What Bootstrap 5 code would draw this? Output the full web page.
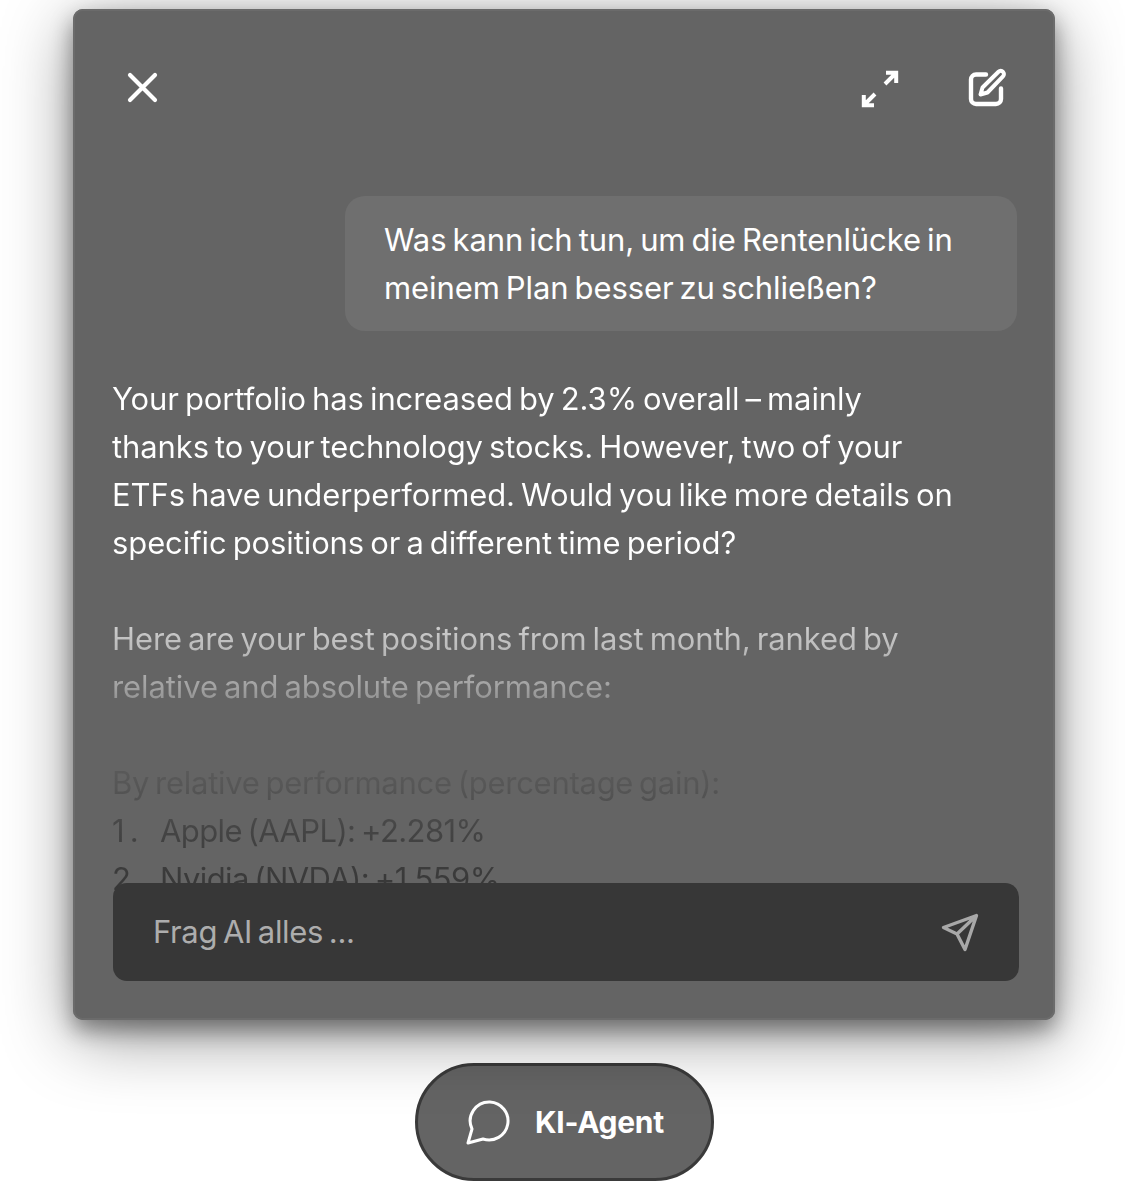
<!DOCTYPE html>
<html lang="de">
<head>
    <meta charset="UTF-8">
    <meta name="viewport" content="width=device-width, initial-scale=1.0">
    <title>KI-Agent</title>
    <link href="https://cdn.jsdelivr.net/npm/bootstrap@5.3.3/dist/css/bootstrap.min.css" rel="stylesheet">
    <style>
        body {
            background-color: #ffffff;
            font-family: 'Inter', 'Liberation Sans', sans-serif;
            overflow: hidden;
            height: 1203px;
            padding-top: 9px;
        }

        /* Chat panel */
        .agent-panel {
            width: 982px;
            height: 1011px;
            margin-left: 73px;
            background-color: #646464;
            border-radius: 10px;
            box-shadow: inset 0 0 0 2px #6b6b6b, 0 10px 22px rgba(0, 0, 0, .4), 0 16px 70px rgba(0, 0, 0, .42);
            overflow: hidden;
        }

        .agent-head {
            padding: 58px 48px 0 51px;
            height: 187px;
        }

        .agent-thread {
            padding: 0 38px 0 39px;
            font-size: 31px;
            line-height: 48px;
            letter-spacing: -.1px;
            word-spacing: -2.5px;
            color: #fff;
        }

        .user-bubble {
            width: 672px;
            padding: 20px 38px 19px 39px;
            background-color: #6f6f6f;
            border-radius: 20px;
        }

        .agent-text {
            width: 842px;
            margin-top: 44px;
            background: linear-gradient(180deg, #fff 0, #fff 195px, #c2c2c2 264px, #a2a2a2 312px, #767676 352px, #5a5a5a 392px, #565656 412px, #444 456px, #383838 510px, #333 100%);
            -webkit-background-clip: text;
            background-clip: text;
            color: transparent;
        }

        .agent-text p { margin-bottom: 48px; }
        .agent-text p:last-child { margin-bottom: 0; }

        .rank-title { letter-spacing: -.27px; }
        .rank-row { letter-spacing: -.6px; }
        .rank-no { width: 48px; flex-shrink: 0; }

        /* Input bar lies over the thread */
        .agent-input {
            left: 40px;
            top: 874px;
            width: 906px;
            height: 98px;
            padding: 0 40px;
            background-color: #373737;
            border-radius: 14px;
            color: #adadad;
            font-size: 31px;
            letter-spacing: -.35px;
            word-spacing: -2.5px;
        }

        /* Launcher */
        .agent-launch {
            width: 299px;
            height: 118px;
            margin: 43px 0 0 415px;
            gap: 24px;
            background-color: #646464;
            border: 3px solid #3a3a3a;
            border-radius: 59px;
            color: #fff;
            font-size: 30px;
            font-weight: 700;
            letter-spacing: -.3px;
        }
    </style>
</head>
<body>
    <div class="agent-panel position-relative">
        <div class="agent-head d-flex justify-content-between align-items-start">
            <svg width="42" height="42" viewBox="0 0 42 42" fill="none" stroke="#fff" stroke-width="4.2" stroke-linecap="round">
                <path d="M6 8 31 33M31 8 6 33"/>
            </svg>
            <div class="d-flex align-items-start" style="gap:64px">
                <svg width="42" height="42" viewBox="0 0 42 42" fill="none" stroke="#fff" stroke-width="4">
                    <path d="M28 17 39 6M29 5.800h10.200V16M18 27 7 38M6.800 28v10.200H17"/>
                </svg>
                <svg width="44" height="44" viewBox="0 0 44 44" fill="none" stroke="#fff" stroke-width="4.4" stroke-linecap="round" stroke-linejoin="round">
                    <path d="M23 7.500H13a5 5 0 0 0-5 5V32a5 5 0 0 0 5 5h20a5 5 0 0 0 5-5V21.500"/>
                    <path d="M17.500 27.500l2-7L35.500 4.800a3.100 3.100 0 0 1 4.500 4.500L24.500 25.500z" stroke-width="4"/>
                </svg>
            </div>
        </div>
        <div class="agent-thread">
            <div class="d-flex justify-content-end">
                <div class="user-bubble">Was kann ich tun, um die Rentenlücke in meinem Plan besser zu schließen?</div>
            </div>
            <div class="agent-text">
                <p>Your portfolio has increased by 2.3% overall – mainly thanks to your technology stocks. However, two of your ETFs have underperformed. Would you like more details on specific positions or a different time period?</p>
                <p>Here are your best positions from last month, ranked by relative and absolute performance:</p>
                <div class="rank-title">By relative performance (percentage gain):</div>
                <div class="rank-row d-flex"><span class="rank-no">1 .</span><span>Apple (AAPL): +2.281%</span></div>
                <div class="rank-row d-flex"><span class="rank-no">2 .</span><span>Nvidia (NVDA): +1.559%</span></div>
                <div class="rank-row d-flex"><span class="rank-no">3 .</span><span>Tesla (TSLA): +1.204%</span></div>
            </div>
        </div>
        <div class="agent-input position-absolute d-flex align-items-center justify-content-between">
            <span>Frag AI alles ...</span>
            <svg width="40" height="40" viewBox="0 0 40 40" fill="none" stroke="#a8a8a8" stroke-width="3.400" stroke-linejoin="round">
                <path d="M37.500 3.500 4.500 15.500 18 22 26 37.500zM37.500 3.500 18 22"/>
            </svg>
        </div>
    </div>
    <div class="agent-launch d-flex align-items-center justify-content-center">
        <svg width="46" height="46" viewBox="0 0 46 46" fill="none" stroke="#fff" stroke-width="3" stroke-linejoin="round">
            <path d="M25 3a19 19 0 1 1-7 37l-15 4 4-14A19 19 0 0 1 25 3z"/>
        </svg>
        <span>KI-Agent</span>
    </div>
    <script src="https://cdn.jsdelivr.net/npm/bootstrap@5.3.3/dist/js/bootstrap.bundle.min.js"></script>
</body>
</html>
